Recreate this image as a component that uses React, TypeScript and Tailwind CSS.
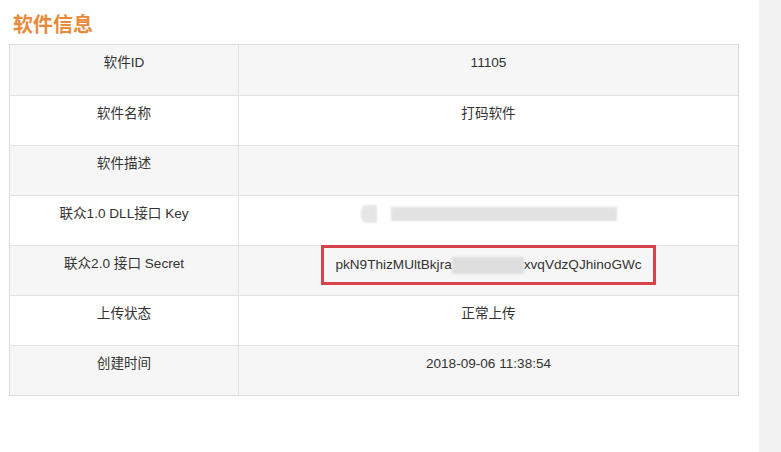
const rows: { label: string; value: string }[] = [
  { label: '软件ID', value: '11105' },
  { label: '软件名称', value: '打码软件' },
  { label: '软件描述', value: '' },
  { label: '联众1.0 DLL接口 Key', value: 'KEY' },
  { label: '联众2.0 接口 Secret', value: 'SECRET' },
  { label: '上传状态', value: '正常上传' },
  { label: '创建时间', value: '2018-09-06 11:38:54' },
]

function Value({ value }: { value: string }) {
  if (value === 'KEY') {
    // 打了马赛克的 key
    return (
      <div className="flex h-[18px] items-center">
        <span className="h-[18px] w-[16px] rounded-l-[6px] bg-[#e6e6e6] blur-[1px]" />
        <span className="ml-[14px] h-[14px] w-[226px] bg-[#e2e2e2] blur-[1px]" />
      </div>
    )
  }
  if (value === 'SECRET') {
    return (
      <div className="-mt-[10px] flex h-[40px] items-center border-[3px] border-[#d8434a] px-[11px]">
        <span>pkN9ThizMUltBkjra</span>
        <span className="h-[17px] w-[72px] bg-[#dedede] blur-[1px]" />
        <span>xvqVdzQJhinoGWc</span>
      </div>
    )
  }
  return <span>{value}</span>
}

export default function App() {
  return (
    <div
      className="flex h-[452px] w-[781px] bg-[#fefefe] text-[13.6px] text-[#333]"
      style={{ fontFamily: '"Liberation Sans", "Noto Sans CJK SC", sans-serif' }}
    >
      <div className="flex-1 pl-[9px]">
        <h1 className="mt-[13px] pl-[4px] text-[20px] font-bold leading-[24px] text-[#e98a3b]">软件信息</h1>
        <div className="mt-[7px] w-[730px] border border-[#dcdcdc]">
          {rows.map((r, i) => (
            <div
              key={r.label}
              className={`flex h-[50px] border-[#e2e2e2] ${i > 0 ? 'border-t' : ''} ${i % 2 === 0 ? 'bg-[#f6f6f6]' : 'bg-white'}`}
            >
              <div className="w-[229px] border-r border-[#e2e2e2] pt-[9px] text-center leading-[18px]">{r.label}</div>
              <div className="flex flex-1 justify-center pt-[9px] leading-[18px]">
                <Value value={r.value} />
              </div>
            </div>
          ))}
        </div>
      </div>
      <div className="w-[22px] bg-[#f2f2f2]" />
    </div>
  )
}
